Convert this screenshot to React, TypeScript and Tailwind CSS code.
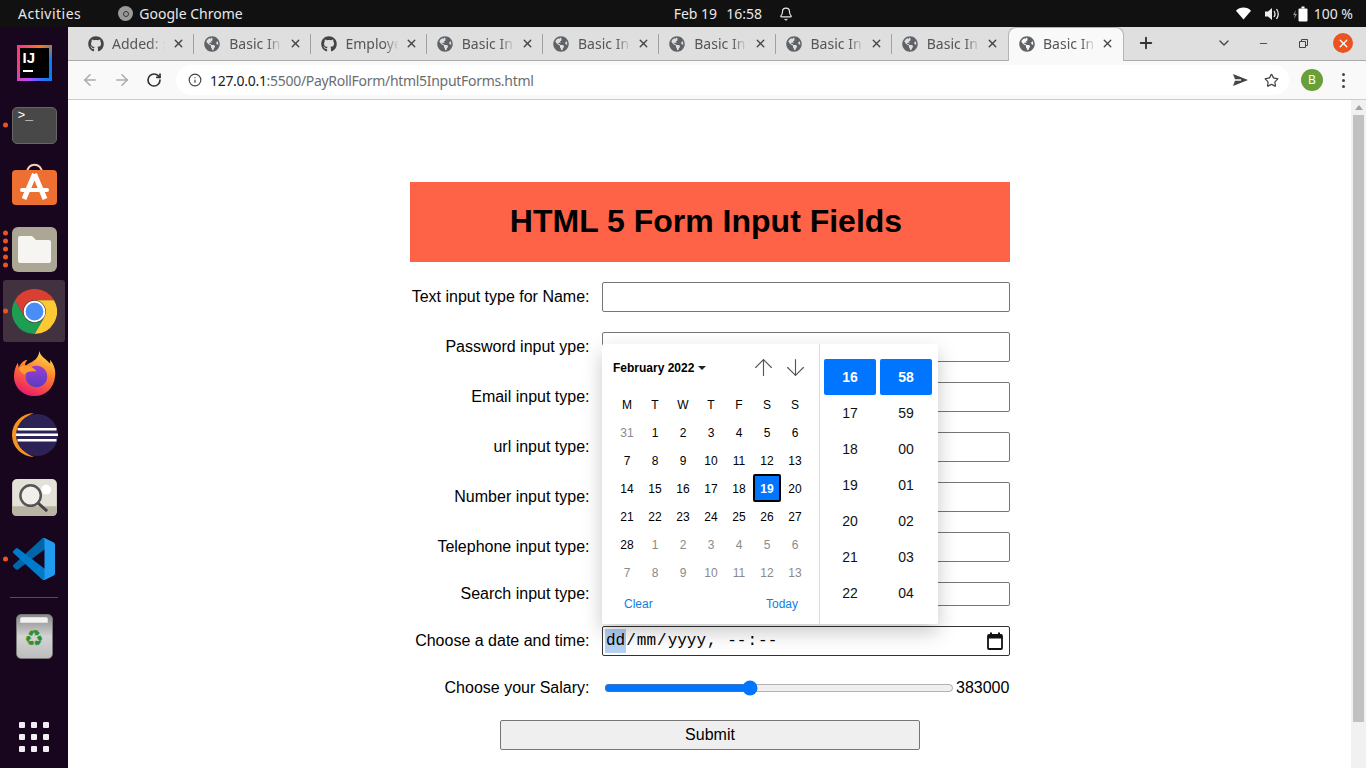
import type { ReactNode } from "react"
import { ArrowLeft, ArrowRight, ArrowUp, ArrowDown, Bell, ChevronDown, Info, Minus, Plus, RotateCw, Star, X } from "lucide-react"
import { FaGithub, FaGlobeAmericas } from "react-icons/fa"

const tabs = [
  { icon: "gh", title: "Added: :" },
  { icon: "web", title: "Basic In" },
  { icon: "gh", title: "Employe" },
  { icon: "web", title: "Basic In" },
  { icon: "web", title: "Basic In" },
  { icon: "web", title: "Basic In" },
  { icon: "web", title: "Basic In" },
  { icon: "web", title: "Basic In" },
]

const fields = [
  { label: "Text input type for Name:", h: "h-[30px]" },
  { label: "Password input ype:", h: "h-[30px]" },
  { label: "Email input type:", h: "h-[30px]" },
  { label: "url input type:", h: "h-[30px]" },
  { label: "Number input type:", h: "h-[30px]" },
  { label: "Telephone input type:", h: "h-[30px]" },
  { label: "Search input type:", h: "h-[24px]" },
]

const weekdays = ["M", "T", "W", "T", "F", "S", "S"]

const days = [
  [31, 1, 2, 3, 4, 5, 6],
  [7, 8, 9, 10, 11, 12, 13],
  [14, 15, 16, 17, 18, 19, 20],
  [21, 22, 23, 24, 25, 26, 27],
  [28, 1, 2, 3, 4, 5, 6],
  [7, 8, 9, 10, 11, 12, 13],
]

const hours = ["16", "17", "18", "19", "20", "21", "22"]
const minutes = ["58", "59", "00", "01", "02", "03", "04"]

function IntelliJ() {
  return (
    <div className="h-[36px] w-[35px] bg-[conic-gradient(from_20deg,#f97a12,#087cfa,#087cfa,#b74af7,#fc3b7c,#fc3b7c,#f97a12)] p-[3px]">
      <div className="flex h-full w-full flex-col bg-black px-[3px] pt-[2px] font-['Liberation_Sans',sans-serif] text-[15px] font-bold leading-[16px] text-white">
        IJ
        <span className="mt-[4px] h-[2px] w-[10px] bg-white" />
      </div>
    </div>
  )
}

function Terminal() {
  return (
    <div className="h-[37px] w-[45px] rounded-[5px] border border-[#666] bg-[#484848] px-[5px] font-['Liberation_Mono',monospace] text-[13px] leading-[16px] text-white">
      &gt;_
    </div>
  )
}

function Store() {
  return (
    <svg className="-mt-[6px]" width="45" height="42" viewBox="0 0 45 42">
      <path d="M15 10 C15 -1 30 -1 30 10" fill="none" stroke="#f3d3b8" strokeWidth="2" />
      <rect x="0" y="7" width="45" height="35" rx="4" fill="#ee6f32" />
      <path d="M22.5 11 L12 36 M22.5 11 L33 36" stroke="#fff" strokeWidth="5" />
      <rect x="8" y="25" width="29" height="4" rx="2" fill="#fff" />
    </svg>
  )
}

function Files() {
  return (
    <div className="flex h-[45px] w-[45px] items-center justify-center rounded-[6px] bg-[#aca695]">
      <svg width="33" height="27" viewBox="0 0 33 27">
        <path d="M2 0 H14 L18 4 H31 Q33 4 33 6 V25 Q33 27 31 27 H2 Q0 27 0 25 V2 Q0 0 2 0 Z" fill="#f6f5f2" />
      </svg>
    </div>
  )
}

function Chrome() {
  return (
    <svg width="45" height="45" viewBox="0 0 48 48">
      <path d="M3.2 12 A24 24 0 0 1 44.8 12 H24 A12 12 0 0 0 13.6 30 Z" fill="#d93f32" />
      <path d="M44.8 12 A24 24 0 0 1 24 48 L34.4 30 A12 12 0 0 0 24 12 Z" fill="#fcc934" />
      <path d="M24 48 A24 24 0 0 1 3.2 12 L13.6 30 A12 12 0 0 0 34.4 30 Z" fill="#1e9e52" />
      <circle cx="24" cy="24" r="11.5" fill="#fff" />
      <circle cx="24" cy="24" r="9.5" fill="#4a8df6" />
    </svg>
  )
}

function Firefox() {
  return (
    <svg width="43" height="45" viewBox="0 0 44 46">
      <defs>
        <linearGradient id="fx" x1="0.7" y1="0" x2="0.3" y2="1">
          <stop offset="0" stopColor="#ffe14a" />
          <stop offset="0.45" stopColor="#ff7a2b" />
          <stop offset="1" stopColor="#e8186e" />
        </linearGradient>
        <linearGradient id="fxp" x1="0.5" y1="0" x2="0.5" y2="1">
          <stop offset="0" stopColor="#9a3fd0" />
          <stop offset="1" stopColor="#5a3bc4" />
        </linearGradient>
      </defs>
      <path d="M27 0 C28 6 34 8 38 13 L38 9 C42 14 44 20 43 26 C42 38 33 46 22 46 C10 46 1 37 1 26 C1 20 3 15 5 12 L6 17 C8 12 12 9 15 9 C12 12 12 14 13 15 C18 11 26 10 27 0 Z" fill="url(#fx)" />
      <circle cx="24" cy="26" r="11" fill="url(#fxp)" />
      <path d="M6 17 C12 13 20 15 24 21 C18 20 14 21 12 24 C9 23 7 20 6 17 Z" fill="#ff9a2e" />
    </svg>
  )
}

function Eclipse() {
  return (
    <svg width="47" height="44" viewBox="0 0 47 44">
      <path d="M23 0 A22 22 0 0 0 23 44 A23.5 23.5 0 0 1 23 0 Z" fill="#f7941e" />
      <circle cx="26" cy="22" r="21" fill="#2c2255" />
      <rect x="6.5" y="15" width="39" height="2.5" fill="#fff" />
      <rect x="5" y="20.5" width="42" height="2.5" fill="#fff" />
      <rect x="6.5" y="26" width="39" height="2.5" fill="#fff" />
    </svg>
  )
}

function Magnifier() {
  return (
    <svg width="45" height="37" viewBox="0 0 46 38">
      <rect width="46" height="38" rx="5" fill="#e4e1d8" />
      <path d="M0 28 H46 V33 Q46 38 41 38 H5 Q0 38 0 33 Z" fill="#b9b4a3" />
      <circle cx="35" cy="11" r="5" fill="#fff" />
      <circle cx="19" cy="17" r="10.5" fill="#f1efea" stroke="#555" strokeWidth="2.5" />
      <path d="M27 25 L36 33" stroke="#444" strokeWidth="3" />
    </svg>
  )
}

function VsCode() {
  return (
    <svg width="42" height="42" viewBox="0 0 100 100">
      <path d="M96.4614 10.7962L75.8569 0.875542C73.4719 -0.272773 70.6217 0.211611 68.75 2.08333L1.29858 63.5832C-0.515693 65.2373 -0.513607 68.0937 1.30308 69.7452L6.81272 74.754C8.29793 76.1042 10.5347 76.2036 12.1338 74.9905L93.3609 13.3699C96.086 11.3026 100 13.2462 100 16.6667V16.4275C100 14.0265 98.6246 11.8378 96.4614 10.7962Z" fill="#0065a9" />
      <path d="M96.4614 89.2038L75.8569 99.1245C73.4719 100.273 70.6217 99.7884 68.75 97.9167L1.29858 36.4168C-0.515693 34.7627 -0.513607 31.9063 1.30308 30.2548L6.81272 25.246C8.29793 23.8958 10.5347 23.7964 12.1338 25.0095L93.3609 86.6301C96.086 88.6974 100 86.7538 100 83.3333V83.5725C100 85.9735 98.6246 88.1622 96.4614 89.2038Z" fill="#007acc" />
      <path d="M75.8578 99.1263C73.4721 100.274 70.6219 99.7885 68.75 97.9166C71.0564 100.223 75 98.5895 75 95.3278V4.67213C75 1.41039 71.0564 -0.223106 68.75 2.08329C70.6219 0.211402 73.4721 -0.273666 75.8578 0.873633L96.4587 10.7807C98.6234 11.8217 100 14.0112 100 16.4132V83.5871C100 85.9891 98.6234 88.1786 96.4586 89.2196L75.8578 99.1263Z" fill="#1f9cf0" />
    </svg>
  )
}

function Trash() {
  return (
    <div className="flex h-[45px] w-[37px] flex-col items-center rounded-[5px] border border-[#777] bg-gradient-to-b from-[#8a8a8a] via-[#d3d3d3] to-[#bdbdbd]">
      <div className="mt-[2px] h-[6px] w-[28px] rounded-t-[2px] border border-[#ddd] bg-[#f2f2f2]" />
      <span className="mt-[4px] font-['DejaVu_Sans',sans-serif] text-[22px] leading-[24px] text-[#2f8f2f]">♻</span>
    </div>
  )
}

function AppGrid() {
  return (
    <div className="grid grid-cols-3 gap-[6px]">
      {Array.from({ length: 9 }).map((_, i) => (
        <span key={i} className="h-[6px] w-[6px] rounded-[1px] bg-[#f0eef0]" />
      ))}
    </div>
  )
}

function DockItem({ children, dots = 0, active = false }: { children: ReactNode; dots?: number; active?: boolean }) {
  return (
    <div className="relative flex h-[62px] w-[68px] items-center justify-center">
      {active && <div className="absolute inset-x-[3px] inset-y-0 rounded-[3px] bg-[#42323f]" />}
      <div className="relative flex items-center justify-center">{children}</div>
      {dots > 0 && (
        <div className="absolute left-[3px] top-1/2 flex -translate-y-1/2 flex-col gap-[3px]">
          {Array.from({ length: dots }).map((_, i) => (
            <span key={i} className="h-[5px] w-[5px] rounded-full bg-[#e95420]" />
          ))}
        </div>
      )}
    </div>
  )
}

function Dock() {
  return (
    <div className="flex w-[68px] shrink-0 flex-col items-center bg-[#17061d] pt-[5px]">
      <DockItem><IntelliJ /></DockItem>
      <DockItem dots={1}><Terminal /></DockItem>
      <DockItem><Store /></DockItem>
      <DockItem dots={5}><Files /></DockItem>
      <DockItem dots={1} active><Chrome /></DockItem>
      <DockItem><Firefox /></DockItem>
      <DockItem><Eclipse /></DockItem>
      <DockItem><Magnifier /></DockItem>
      <DockItem dots={1}><VsCode /></DockItem>
      <div className="mt-[7px] h-px w-[48px] bg-[#5a4a5c]" />
      <div className="mt-[7px] flex h-[62px] items-center justify-center"><Trash /></div>
      <div className="mt-[55px] flex items-center justify-center"><AppGrid /></div>
    </div>
  )
}

function TopBar() {
  return (
    <div className="flex h-[27px] shrink-0 items-center bg-[#111111] font-['Noto_Sans',sans-serif] text-[14px] text-[#e8e8e8]">
      <span className="ml-[18px] tracking-[0.5px]">Activities</span>
      <span className="ml-[37px] flex h-[15px] w-[15px] items-center justify-center rounded-full bg-[#9a9a9a]">
        <span className="h-[6px] w-[6px] rounded-full border border-[#333]" />
      </span>
      <span className="ml-[6px]">Google Chrome</span>
      <span className="ml-[431px]">Feb 19</span>
      <span className="ml-[9px]">16:58</span>
      <Bell className="ml-[17px]" size={14} />
      <div className="ml-auto mr-[13px] flex items-center">
        <svg width="15" height="13" viewBox="0 0 16 13">
          <path d="M0 3.5 C4 -1 12 -1 16 3.5 L8 13 Z" fill="#fff" />
        </svg>
        <svg className="ml-[14px]" width="15" height="14" viewBox="0 0 15 14">
          <path d="M0 4.5 H3 L7 1 V13 L3 9.5 H0 Z" fill="#eee" />
          <path d="M9 4 Q11 7 9 10 M11.5 2 Q15 7 11.5 12" fill="none" stroke="#eee" strokeWidth="1.3" />
        </svg>
        <svg className="ml-[13px]" width="15" height="16" viewBox="0 0 15 16">
          <path d="M3 4 L0 9 H2 L1 13 L4 8 H2 Z" fill="#999" />
          <rect x="5.5" y="2.5" width="9" height="13" rx="1" fill="#fff" />
          <rect x="8.5" y="0.5" width="3" height="2" fill="#fff" />
        </svg>
        <span className="ml-[6px]">100 %</span>
      </div>
    </div>
  )
}

function TabContent({ icon, title, tight = false }: { icon: string; title: string; tight?: boolean }) {
  return (
    <>
      {icon === "gh" ? <FaGithub size={16} color="#444" /> : <FaGlobeAmericas size={16} color="#5f6368" />}
      <span
        className={`${tight ? "ml-[8px]" : "ml-[9px]"} w-[53px] whitespace-nowrap text-[14px] text-[#555] [mask-image:linear-gradient(to_right,black_72%,transparent)]`}
      >
        {title}
      </span>
      <X className="ml-auto mr-[9px] text-[#444]" size={13} strokeWidth={2.5} />
    </>
  )
}

function TabStrip() {
  return (
    <div className="flex h-[34px] shrink-0 border-b border-[#aaaaaa] bg-[#dfdfdf] pl-[10px] font-['Noto_Sans',sans-serif]">
      {tabs.map((tab, i) => (
        <div key={i} className="relative flex h-[33px] w-[116.25px] items-center pl-[10px]">
          <TabContent {...tab} tight={i === 0} />
          {i < 7 && <span className="absolute right-0 top-[7px] h-[20px] w-px bg-[#a0a0a0]" />}
        </div>
      ))}
      <div className="relative z-10 flex h-[34px] w-[116px] items-center rounded-t-[8px] border-x border-t border-[#b4b4b4] bg-[#f9f9f9] pb-[2px] pl-[10px]">
        <TabContent icon="web" title="Basic In" tight />
      </div>
      <Plus className="ml-[13px] mt-[7px] text-[#333]" size={18} strokeWidth={2.5} />
      <ChevronDown className="ml-[61px] mt-[8px] text-[#444]" size={16} />
      <Minus className="ml-[26px] mt-[11px] text-[#444]" size={11} />
      <svg className="ml-[30px] mt-[12px]" width="9" height="9" viewBox="0 0 9 9">
        <path d="M2.5 2.5 V0.5 H8.5 V6.5 H6.5 M0.5 2.5 H6.5 V8.5 H0.5 Z" fill="none" stroke="#444" />
      </svg>
      <span className="ml-[25px] mt-[6px] flex h-[20px] w-[20px] items-center justify-center rounded-full bg-[#e95420]">
        <X className="text-white" size={13} strokeWidth={2.5} />
      </span>
    </div>
  )
}

function Toolbar() {
  return (
    <div className="flex h-[39px] shrink-0 items-center border-b border-[#cccccc] bg-[#f9f9f9] font-['Noto_Sans',sans-serif]">
      <ArrowLeft className="ml-[13px] text-[#aaa]" size={18} />
      <ArrowRight className="ml-[14px] text-[#aaa]" size={18} />
      <RotateCw className="ml-[15px] text-[#333]" size={16} strokeWidth={2.5} />
      <div className="ml-[14px] flex h-[30px] w-[1113px] items-center rounded-full bg-white pl-[12px] text-[14px] tracking-[-0.3px]">
        <Info className="text-[#444]" size={14} />
        <span className="ml-[8px] text-[#202124]">127.0.0.1</span>
        <span className="text-[#6a6e72]">:5500/PayRollForm/html5InputForms.html</span>
        <svg className="ml-auto" width="15" height="12" viewBox="0 0 15 12">
          <path d="M0 0 L15 6 L0 12 L2 6.8 H8 V5.2 H2 Z" fill="#444" />
        </svg>
        <Star className="ml-[16px] mr-[10px] text-[#444]" size={15} strokeWidth={2} />
      </div>
      <span className="ml-[12px] flex h-[22px] w-[22px] items-center justify-center rounded-full bg-[#689f38] text-[12px] text-white">B</span>
      <div className="ml-[19px] flex flex-col gap-[3px]">
        <span className="h-[3px] w-[3px] rounded-full bg-[#444]" />
        <span className="h-[3px] w-[3px] rounded-full bg-[#444]" />
        <span className="h-[3px] w-[3px] rounded-full bg-[#444]" />
      </div>
    </div>
  )
}

function DatePicker() {
  return (
    <div className="absolute left-[192px] top-[162px] z-20 flex h-[280px] w-[336px] rounded-[2px] bg-white shadow-[0_8px_20px_rgba(0,0,0,0.22)]">
      <div className="flex w-[218px] flex-col border-r border-[#dddddd] pl-[11px]">
        <div className="flex h-[47px] items-center">
          <span className="text-[12px] font-bold text-black">February 2022</span>
          <span className="ml-[4px] h-0 w-0 border-x-[4px] border-t-[4px] border-x-transparent border-t-[#222]" />
          <ArrowUp className="ml-[44px] text-[#555]" size={27} strokeWidth={1} />
          <ArrowDown className="ml-[5px] text-[#555]" size={27} strokeWidth={1} />
        </div>
        <div className="grid w-[196px] grid-cols-7 text-center text-[12px] text-black">
          {weekdays.map((d, i) => (
            <span key={i} className="flex h-[28px] items-center justify-center">{d}</span>
          ))}
          {days.map((row, r) =>
            row.map((d, c) => {
              const muted = (r === 0 && c === 0) || (r === 4 && c > 0) || r === 5
              const today = r === 2 && c === 5
              return (
                <span
                  key={`${r}-${c}`}
                  className={
                    today
                      ? "flex h-[28px] -translate-y-px items-center justify-center rounded-[2px] border-2 border-black bg-[#0075ff] pt-[2px] font-bold text-white"
                      : muted
                        ? "flex h-[28px] items-center justify-center text-[#8a8a8a]"
                        : "flex h-[28px] items-center justify-center"
                  }
                >
                  {d}
                </span>
              )
            })
          )}
        </div>
        <div className="mt-[3px] flex w-[185px] justify-between pl-[11px] text-[12px] leading-[28px] text-[#0f7fe0]">
          <span>Clear</span>
          <span>Today</span>
        </div>
      </div>
      <div className="flex gap-[4px] pl-[4px] pt-[15px] text-center text-[14px] text-[#111]">
        {[hours, minutes].map((col, c) => (
          <div key={c} className="w-[52px]">
            {col.map((v, i) => (
              <div
                key={v}
                className={
                  i === 0
                    ? "flex h-[36px] items-center justify-center rounded-[2px] bg-[#0075ff] font-bold text-white"
                    : "flex h-[36px] items-center justify-center"
                }
              >
                {v}
              </div>
            ))}
          </div>
        ))}
      </div>
    </div>
  )
}

function InputForm() {
  return (
    <form className="relative mt-[82px] w-[600px] font-['Liberation_Sans',sans-serif] text-[16px] text-black">
      <h1 className="flex h-[80px] items-center justify-center bg-[#ff6347] pb-[2px] pr-[8px] text-[32px] font-bold">HTML 5 Form Input Fields</h1>

      <div className="mt-[20px] flex flex-col gap-[20px]">
        {fields.map(f => (
          <div key={f.label} className="flex items-center">
            <label className="w-[179.5px] whitespace-nowrap text-right">{f.label}</label>
            <input type="text" className={`ml-[12.5px] w-[408px] rounded-[2px] border border-[#767676] bg-white ${f.h}`} />
          </div>
        ))}

        <div className="flex items-center">
          <label className="w-[179.5px] whitespace-nowrap text-right">Choose a date and time:</label>
          <div className="ml-[12.5px] flex h-[30px] w-[408px] items-center rounded-[2px] border border-[#333] bg-white pl-[2px] pr-[6px] font-['Liberation_Mono',monospace] text-[16px]">
            <span className="bg-[#b4d0f4] px-px">dd</span>
            <span>/</span>
            <span className="px-px">mm</span>
            <span>/</span>
            <span className="px-px">yyyy</span>
            <span className="whitespace-pre">, </span>
            <span className="px-px">--</span>
            <span>:</span>
            <span className="px-px">--</span>
            <svg className="ml-auto" width="16" height="18" viewBox="0 0 16 18">
              <path d="M1 4 Q1 3 2 3 H14 Q15 3 15 4 V16 Q15 17 14 17 H2 Q1 17 1 16 Z" fill="none" stroke="#111" strokeWidth="1.8" />
              <rect x="1" y="3" width="14" height="3.5" fill="#111" />
              <path d="M4 0.5 V3 M12 0.5 V3" stroke="#111" strokeWidth="2" />
            </svg>
          </div>
        </div>

        <div className="flex h-[24px] items-center">
          <label className="w-[179.5px] whitespace-nowrap text-right">Choose your Salary:</label>
          <input
            type="range"
            min={0}
            max={100}
            step="any"
            defaultValue={41.3}
            className="ml-[14.5px] w-[350px] accent-[#0075ff]"
          />
          <span className="ml-[2px]">383000</span>
        </div>
      </div>

      <div className="mt-[20px] flex justify-center">
        <button type="button" className="h-[30px] w-[420px] rounded-[2px] border border-[#767676] bg-[#efefef]">
          Submit
        </button>
      </div>

      <DatePicker />
    </form>
  )
}

function Scrollbar() {
  return (
    <div className="-ml-px flex w-[15px] shrink-0 flex-col items-center bg-[#f1f1f1]">
      <span className="mt-[5px] h-0 w-0 border-x-[4px] border-b-[5px] border-x-transparent border-b-[#a3a3a3]" />
      <div className="mt-[5px] h-[607px] w-[11px] bg-[#c1c1c1]" />
    </div>
  )
}

export default function App() {
  return (
    <div className="flex h-[768px] w-[1366px] flex-col overflow-hidden bg-white">
      <TopBar />
      <div className="flex min-h-0 flex-1">
        <Dock />
        <div className="flex min-w-0 flex-1 flex-col">
          <TabStrip />
          <Toolbar />
          <div className="flex min-h-0 flex-1">
            <div className="flex flex-1 justify-center overflow-hidden">
              <InputForm />
            </div>
            <Scrollbar />
          </div>
        </div>
      </div>
    </div>
  )
}
